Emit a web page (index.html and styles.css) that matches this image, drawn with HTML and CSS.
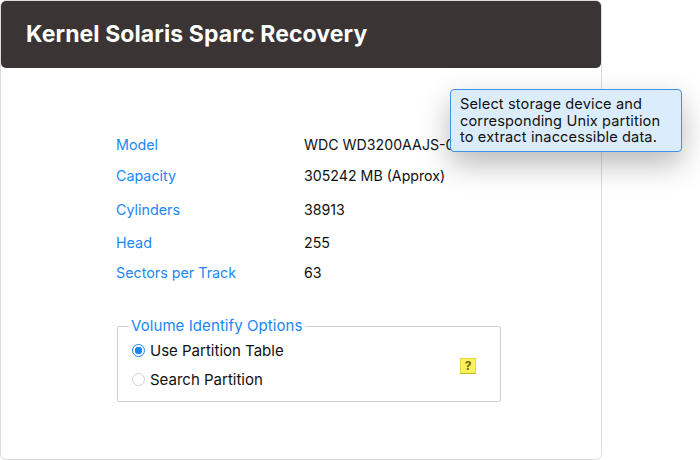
FILE: index.html
```html
<!DOCTYPE html>
<html lang="en">
<head>
  <meta charset="UTF-8">
  <title>Kernel Solaris Sparc Recovery</title>
  <link rel="stylesheet" href="styles.css">
</head>
<body>
  <div class="window">
    <div class="title-bar">Kernel Solaris Sparc Recovery</div>

    <div class="content">
      <div class="info">
        <div class="info-label">Model</div>
        <div class="info-value">WDC WD3200AAJS-00B4A0</div>
        <div class="info-label">Capacity</div>
        <div class="info-value">305242 MB (Approx)</div>
        <div class="info-label">Cylinders</div>
        <div class="info-value">38913</div>
        <div class="info-label">Head</div>
        <div class="info-value">255</div>
        <div class="info-label">Sectors per Track</div>
        <div class="info-value">63</div>
      </div>

      <fieldset class="options">
        <legend>Volume Identify Options</legend>
        <div class="option-row">
          <span class="radio radio-on"></span>
          <span>Use Partition Table</span>
        </div>
        <div class="option-row">
          <span class="radio"></span>
          <span>Search Partition</span>
        </div>
        <div class="help-icon">?</div>
      </fieldset>
    </div>
  </div>

  <div class="tooltip">Select storage device and corresponding Unix partition to extract inaccessible data.</div>
</body>
</html>
```

FILE: styles.css
```css
html, body {
  margin: 0;
  padding: 0;
  height: 100%;
  overflow: hidden;
}
body {
  position: relative;
  font-family: Inter, "Open Sans", sans-serif;
  font-size: 14.2px;
  color: #111;
  background: #fff;
}
.window {
  box-sizing: border-box;
  width: 602px;
  height: 460px;
  border: 1px solid #dcdcdc;
  border-radius: 6px;
  background: #fff;
}
.title-bar {
  box-sizing: border-box;
  height: 67px;
  padding: 18px 0 0 25px;
  background: #3b3434;
  border-radius: 5px;
  color: #fff;
  font-size: 23px;
  line-height: 30px;
  font-weight: 700;
  letter-spacing: 0.09px;
}
.content {
  padding: 61px 0 0 115px;
}
.info {
  display: grid;
  grid-template-columns: 188px 1fr;
  grid-template-rows: 30px 32px 36px 30px 30px;
  align-items: center;
}
.info-label {
  color: #1b87f5;
  font-size: 14.3px;
}
.info-value {
  white-space: nowrap;
}
.options {
  position: relative;
  box-sizing: border-box;
  width: 384px;
  height: 85px;
  margin: 30px 0 0 1px;
  padding: 0 0 0 14px;
  border: 1px solid #cfcfcf;
  border-radius: 2px;
  font-size: 15px;
}
.options legend {
  position: relative;
  top: -1px;
  padding: 0 2px;
  margin-left: -3px;
  color: #1b87f5;
  letter-spacing: 0.08px;
}
.option-row {
  display: flex;
  align-items: center;
  gap: 5px;
  height: 29px;
}
.radio {
  box-sizing: border-box;
  width: 13px;
  height: 13px;
  border: 1px solid #cfcfcf;
  border-radius: 50%;
  background: #fff;
}
.radio-on {
  border: 1px solid #1b87f5;
  background: radial-gradient(circle, #1b87f5 0 3.5px, #fff 4px);
}
.help-icon {
  position: absolute;
  left: 342px;
  top: 22px;
  width: 16px;
  height: 16px;
  background: #fbf15a;
  border: 1px solid #e6d838;
  border-bottom-color: #c9b820;
  box-sizing: border-box;
  color: #6f6210;
  font-size: 12px;
  line-height: 14px;
  font-weight: 700;
  text-align: center;
}
.tooltip {
  position: absolute;
  left: 450px;
  top: 89px;
  box-sizing: border-box;
  width: 232px;
  height: 63px;
  padding: 6px 9px;
  background: #dbecfd;
  border: 1px solid #3c92e6;
  border-radius: 4px;
  box-shadow: 0 12px 30px rgba(0, 0, 0, 0.28);
  color: #111;
  font-size: 14.6px;
  line-height: 16.5px;
  letter-spacing: 0.12px;
}
```
